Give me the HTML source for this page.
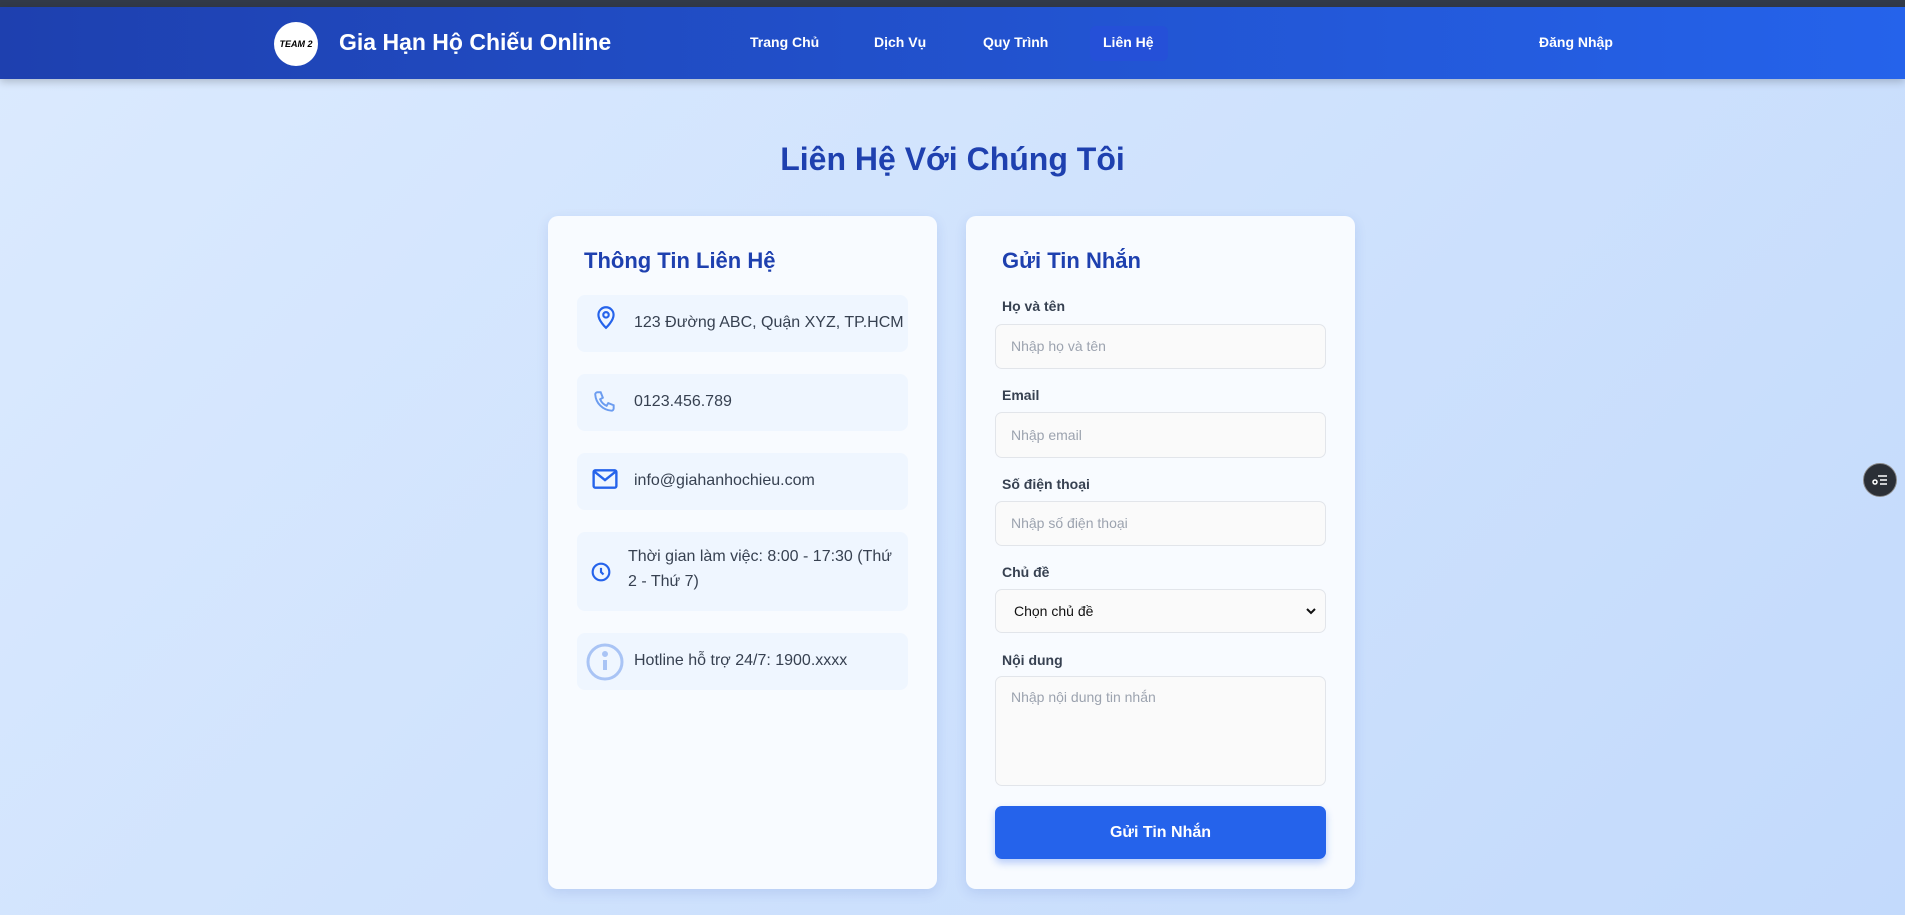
<!DOCTYPE html>
<html><head><meta charset="utf-8"><style>
*{box-sizing:border-box;margin:0;padding:0}
body{width:1905px;height:915px;overflow:hidden;font-family:"Liberation Sans","DejaVu Sans",sans-serif;background:linear-gradient(135deg,#dbeafe 0%,#c3dafc 100%);position:relative}
.top{position:absolute;left:0;top:0;width:1905px;height:7px;background:#323a48}
.hdr{position:absolute;left:0;top:7px;width:1905px;height:72px;background:linear-gradient(90deg,#1e40af,#2563eb);box-shadow:0 3px 8px rgba(0,0,0,.2)}
.logo{position:absolute;left:274px;top:15px;width:44px;height:44px;border-radius:50%;background:#fff;font:italic bold 9px "Liberation Sans",sans-serif;color:#000;text-align:center;line-height:44px}
.brand{position:absolute;left:339px;top:22px;color:#fff;font-weight:bold;font-size:23px}
.nav{position:absolute;top:27px;color:#fff;font-weight:bold;font-size:14px;line-height:16px}
.act{position:absolute;left:1090px;top:19px;width:78px;height:35px;border-radius:6px;background:#2550d8}
h1{position:absolute;left:0;width:1905px;top:141px;text-align:center;color:#1e40af;font-size:32px;font-weight:bold}
.card{position:absolute;top:216px;height:673px;background:#f8fbff;border-radius:10px;box-shadow:0 4px 12px rgba(30,64,175,.12)}
.ct{position:absolute;color:#1e40af;font-weight:bold;font-size:22px;top:32px}
.it{position:absolute;left:29px;width:331px;background:#eff6ff;border-radius:8px;color:#374151;font-size:16px}
.it svg{position:absolute}
.it span{position:absolute;left:57px}
.lb{position:absolute;left:36px;font-size:14px;font-weight:bold;color:#374151}
.in{position:absolute;left:29px;width:331px;background:#fafafa;border:1px solid #e2e5ea;border-radius:7px;color:#9ca3af;font-size:14px;padding-left:15px}
.btn{position:absolute;left:29px;top:590px;width:331px;height:53px;background:#2563eb;border-radius:7px;color:#fff;font-weight:bold;font-size:16px;text-align:center;line-height:53px;box-shadow:0 4px 8px rgba(37,99,235,.3)}
.fab{position:absolute;left:1863px;top:463px;width:34px;height:34px;border-radius:50%;background:#2b2f36;border:1px solid #888}
</style></head><body>
<div class="top"></div>
<div class="hdr">
<div class="logo">TEAM 2</div>
<div class="brand">Gia Hạn Hộ Chiếu Online</div>
<div class="act"></div>
<div class="nav" style="left:750px">Trang Chủ</div>
<div class="nav" style="left:874px">Dịch Vụ</div>
<div class="nav" style="left:983px">Quy Trình</div>
<div class="nav" style="left:1103px">Liên Hệ</div>
<div class="nav" style="left:1539px">Đăng Nhập</div>
</div>
<h1>Liên Hệ Với Chúng Tôi</h1>
<div class="card" style="left:548px;width:389px">
<div class="ct" style="left:36px">Thông Tin Liên Hệ</div>
<div class="it" style="top:79px;height:57px"><svg style="left:16px;top:9px" width="26" height="26" viewBox="0 0 24 24" fill="none" stroke="#2563eb" stroke-width="2"><path d="M12 22s-7-6.5-7-12a7 7 0 0114 0c0 5.5-7 12-7 12z"/><circle cx="12" cy="10" r="2.5"/></svg><span style="top:19px">123 Đường ABC, Quận XYZ, TP.HCM</span></div>
<div class="it" style="top:158px;height:57px"><svg style="left:15px;top:15px" width="26" height="26" viewBox="0 0 24 24" fill="none" stroke="#6b9cf0" stroke-width="1.8"><path d="M5 3h3l2 5-2.5 1.5a11 11 0 006 6L15 13l5 2v3a2 2 0 01-2 2A16 16 0 013 5a2 2 0 012-2z"/></svg><span style="top:19px">0123.456.789</span></div>
<div class="it" style="top:237px;height:57px"><svg style="left:15px;top:15px" width="26" height="22" viewBox="0 0 24 20" fill="none" stroke="#2563eb" stroke-width="2.2"><rect x="1.5" y="2" width="21" height="16" rx="1.5"/><path d="M2 3l10 8 10-8"/></svg><span style="top:19px">info@giahanhochieu.com</span></div>
<div class="it" style="top:316px;height:79px"><svg style="left:14px;top:30px" width="20" height="20" viewBox="0 0 24 24" fill="none" stroke="#2563eb" stroke-width="2.6"><circle cx="12" cy="12" r="10"/><path d="M12 7v5l3 3"/></svg><span style="left:51px;top:12px;width:270px;line-height:25px">Thời gian làm việc: 8:00 - 17:30 (Thứ 2 - Thứ 7)</span></div>
<div class="it" style="top:417px;height:57px"><svg style="left:9px;top:10px" width="38" height="38" viewBox="0 0 38 38" fill="none" stroke="#a9c4f5" stroke-width="3"><circle cx="19" cy="19" r="17"/><path d="M19 17v10" stroke-width="4"/><circle cx="19" cy="11" r="1.5" fill="#a9c4f5"/></svg><span style="top:19px">Hotline hỗ trợ 24/7: 1900.xxxx</span></div>
</div>
<div class="card" style="left:966px;width:389px">
<div class="ct" style="left:36px">Gửi Tin Nhắn</div>
<div class="lb" style="top:82px">Họ và tên</div>
<div class="in" style="top:108px;height:45px;line-height:43px">Nhập họ và tên</div>
<div class="lb" style="top:171px">Email</div>
<div class="in" style="top:196px;height:46px;line-height:44px">Nhập email</div>
<div class="lb" style="top:260px">Số điện thoại</div>
<div class="in" style="top:285px;height:45px;line-height:43px">Nhập số điện thoại</div>
<div class="lb" style="top:348px">Chủ đề</div>
<div class="in" style="top:373px;height:44px;line-height:42px;color:#111;padding-left:18px">Chọn chủ đề<svg style="position:absolute;right:8px;top:16px" width="12" height="10" viewBox="0 0 12 10"><path d="M2 3l4 4 4-4" fill="none" stroke="#111" stroke-width="2"/></svg></div>
<div class="lb" style="top:436px">Nội dung</div>
<div class="in" style="top:460px;height:110px;padding-top:12px">Nhập nội dung tin nhắn</div>
<div class="btn">Gửi Tin Nhắn</div>
</div>
<div class="fab"><svg style="position:absolute;left:8px;top:9px" width="16" height="14" viewBox="0 0 16 14" fill="none" stroke="#fff" stroke-width="1.5"><path d="M6 3h9M8 7h7M8 11h7"/><circle cx="3" cy="9" r="2"/></svg></div>
</body></html>
